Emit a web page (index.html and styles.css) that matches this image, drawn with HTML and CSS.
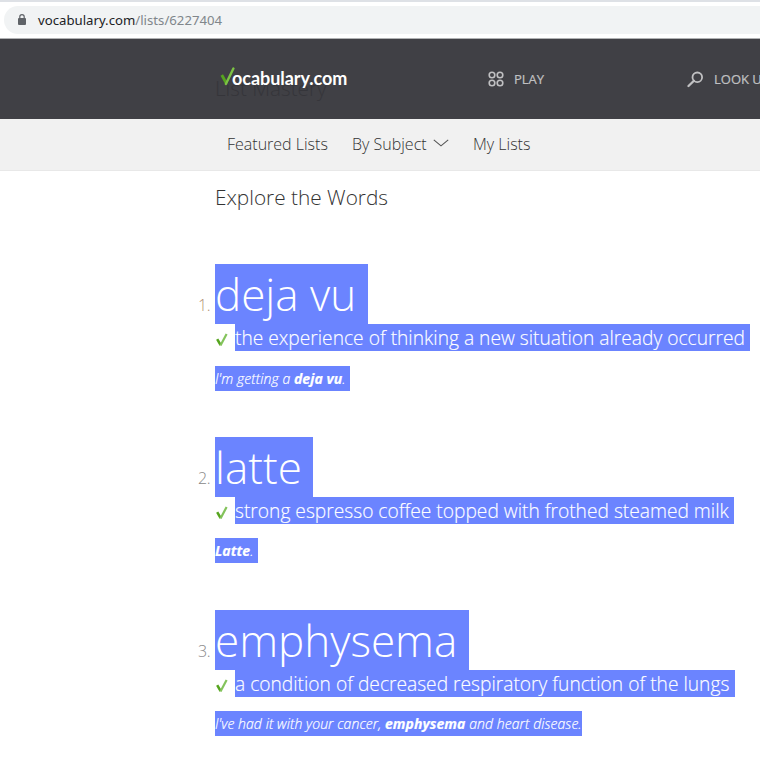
FILE: index.html
```html
<!DOCTYPE html>
<html lang="en">
<head>
<meta charset="utf-8">
<title>Vocabulary.com</title>
<link rel="stylesheet" href="styles.css">
</head>
<body>
<svg class="defs" width="0" height="0">
  <symbol id="check" viewBox="0 0 12 14">
    <path d="M1.2 6.2 4.6 12" fill="none" stroke="#56a51e" stroke-width="2.5"/>
    <path d="M4.5 12.6 10.6 1" fill="none" stroke="#83c35b" stroke-width="2.2"/>
  </symbol>
</svg>
<div class="browser">
  <div class="address">
    <svg class="lock" width="8" height="11" viewBox="0 0 8 11"><path d="M1.8 5V2.8a2.2 2.2 0 0 1 4.4 0V5" fill="none" stroke="#5f6368" stroke-width="1.2"/><rect y="4" width="8" height="7" rx="1" fill="#5f6368"/></svg>
    <span class="url"><b>vocabulary.com</b>/lists/6227404</span>
  </div>
</div>
<header class="header">
  <div class="under">List Mastery</div>
  <div class="logo">
    <svg width="15" height="19" viewBox="0 0 15 19"><path d="M1.8 8 6.2 16" fill="none" stroke="#56a51e" stroke-width="2.8"/><path d="M5.9 17 13.4 1.5" fill="none" stroke="#7cc344" stroke-width="2.4" stroke-linecap="round"/></svg>
    <span>ocabulary.com</span>
  </div>
  <a class="tool play">
    <svg width="16" height="16" viewBox="0 0 16 16" fill="none" stroke="#c0c0c2" stroke-width="1.6"><circle cx="4" cy="4" r="2.8"/><circle cx="12" cy="4" r="2.8"/><circle cx="4" cy="12" r="2.8"/><circle cx="12" cy="12" r="2.8"/></svg>
    <span>PLAY</span>
  </a>
  <a class="tool look">
    <svg width="17" height="17" viewBox="0 0 17 17" fill="none" stroke="#c0c0c2" stroke-width="1.8"><circle cx="10.3" cy="6.3" r="4.8"/><path d="M6.9 9.7 1.5 15" stroke-width="2.3" stroke-linecap="round"/></svg>
    <span>LOOK UP</span>
  </a>
</header>
<nav class="nav">
  <a class="featured">Featured Lists</a>
  <a class="subject">By Subject</a>
  <svg class="chevron" width="16" height="8" viewBox="0 0 16 8"><path d="M.8.8 8 6.8 15.2.8" fill="none" stroke="#555" stroke-width="1.1"/></svg>
  <a class="mine">My Lists</a>
</nav>
<main class="main">
  <h2 class="title">Explore the Words</h2>
  <ol class="words">
    <li class="item first">
      <span class="num">1.</span>
      <div class="entry">
        <div class="word w1"><span>deja vu</span></div>
        <div class="def"><svg width="12" height="14"><use href="#check"/></svg><p class="d1"><span>the experience of thinking a new situation already occurred</span></p></div>
        <p class="example e1"><span>I'm getting a <strong>deja vu</strong>.</span></p>
      </div>
    </li>
    <li class="item">
      <span class="num">2.</span>
      <div class="entry">
        <div class="word w2"><span>latte</span></div>
        <div class="def"><svg width="12" height="14"><use href="#check"/></svg><p class="d2"><span>strong espresso coffee topped with frothed steamed milk</span></p></div>
        <p class="example e2"><span><strong>Latte</strong>.</span></p>
      </div>
    </li>
    <li class="item">
      <span class="num">3.</span>
      <div class="entry">
        <div class="word w3"><span>emphysema</span></div>
        <div class="def"><svg width="12" height="14"><use href="#check"/></svg><p class="d3"><span>a condition of decreased respiratory function of the lungs</span></p></div>
        <p class="example e3"><span>I've had it with your cancer, <strong>emphysema</strong> and heart disease.</span></p>
      </div>
    </li>
  </ol>
</main>
</body>
</html>
```
FILE: styles.css
```css
* { box-sizing: border-box; margin: 0; padding: 0; }
body { width: 760px; height: 759px; overflow: hidden; background: #fff; font-family: "Open Sans", sans-serif; font-weight: 300; color: #333; }
svg { display: block; flex: none; }
.defs { position: absolute; }
.browser { height: 39px; padding: 4px 0 0 4px; border-top: 2px solid #dee1e6; border-bottom: 1px solid #b0b1b3; }
.address { display: flex; align-items: center; height: 28px; padding-left: 14px; background: #f1f3f4; border-radius: 14px 0 0 14px; }
.lock { margin-top: -2px; }
.url { margin-left: 12px; font: 400 13.2px/28px "Noto Sans", sans-serif; color: #80868b; white-space: nowrap; }
.url b { font-weight: 400; color: #202124; }
.header { position: relative; display: flex; height: 80px; padding-left: 220px; background: #404045; overflow: hidden; }
.under { position: absolute; left: 215px; top: 34px; font-size: 20.7px; line-height: 30px; color: #35353a; white-space: nowrap; }
.logo { position: relative; display: flex; flex: none; width: 268px; padding-top: 28px; }
.logo span { margin: -1px 0 0 -3px; font: 700 18px/24px Lato, sans-serif; color: #fff; letter-spacing: -.05px; white-space: nowrap; }
.tool { display: flex; flex: none; height: 80px; align-items: center; gap: 10px; font-size: 13px; font-weight: 400; color: #c0c0c2; white-space: nowrap; }
.play { width: 199px; }
.tool span { -webkit-text-stroke: .2px #c0c0c2; }
.nav { display: flex; height: 52px; padding-left: 227px; background: #f1f1f1; border-bottom: 1px solid #e8e8e8; font-size: 16px; line-height: 50px; white-space: nowrap; }
.featured { width: 125px; }
.subject { width: 81px; }
.chevron { margin-top: 20px; }
.mine { margin-left: 24px; }
.main { padding-left: 215px; }
.title { height: 93px; padding-top: 11px; font-size: 20.8px; line-height: 30px; font-weight: 300; }
.words { list-style: none; margin-left: -17px; }
.item { display: flex; height: 173px; }
.num { width: 17px; padding-top: 30px; font-size: 16px; line-height: 22px; color: #888; letter-spacing: -.3px; }
.first .num { color: #b08f72; }
.word { height: 60px; background: #6b84ff; color: #fff; font-size: 44px; line-height: 60px; white-space: nowrap; }
.w1 { width: 153px; }
.w2 { width: 98px; }
.w3 { width: 254px; }
.def { display: flex; height: 27px; }
.def svg { margin: 9px 7px 0 1px; }
.def p { height: 27px; background: #6b84ff; color: #fff; font-size: 19.2px; line-height: 28px; -webkit-text-stroke: .15px #fff; white-space: nowrap; }
.d1 { width: 515px; }
.d2 { width: 499px; }
.d3 { width: 500px; }
.example { height: 25px; margin-top: 14px; background: #6b84ff; color: #fff; font-size: 14px; letter-spacing: .07px; line-height: 25px; -webkit-text-stroke: .2px #fff; font-style: italic; white-space: nowrap; }
.first .example { margin-top: 15px; }
.example strong { font-weight: 700; }
.e1 { width: 135px; }
.e2 { width: 43px; }
.e3 { width: 367px; }
```
